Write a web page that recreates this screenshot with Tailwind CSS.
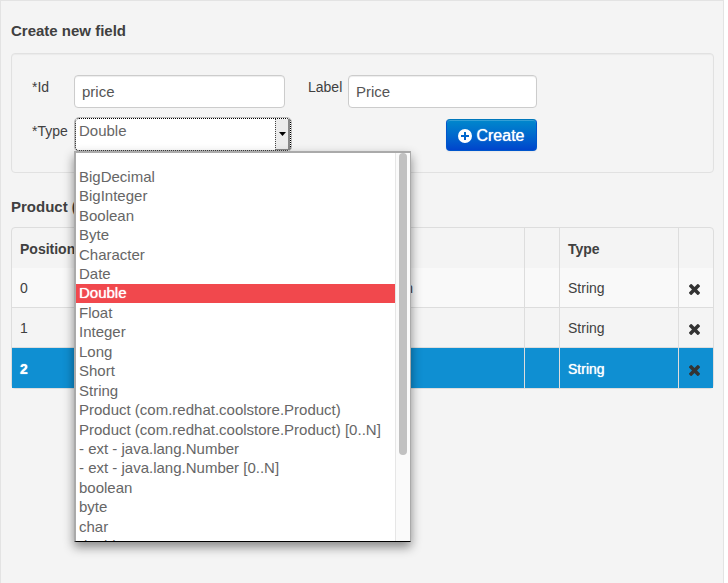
<!DOCTYPE html>
<html lang="en">
<head>
<meta charset="utf-8">
<meta name="viewport" content="width=device-width, initial-scale=1">
<title>Create new field</title>
<script src="https://cdn.jsdelivr.net/npm/@tailwindcss/browser@4"></script>
</head>
<body class="bg-white pr-1 font-['Liberation_Sans',Arial,sans-serif] text-[#404040]">
<svg class="hidden" aria-hidden="true">
  <symbol id="remove" viewBox="302 366 1188 1188"><path d="M1490 1322q0 40-28 68l-136 136q-28 28-68 28t-68-28l-294-294-294 294q-28 28-68 28t-68-28l-136-136q-28-28-28-68t28-68l294-294-294-294q-28-28-28-68t28-68l136-136q28-28 68-28t68 28l294 294 294-294q28-28 68-28t68 28l136 136q28 28 28 68t-28 68l-294 294 294 294q28 28 28 68z"/></symbol>
</svg>
<main class="min-h-screen border border-b-0 border-[#e3e3e3] bg-[#f4f4f4] pt-5 pr-[9px] pl-[10px]">
  <h2 class="text-[15px] leading-5 font-bold">Create new field</h2>

  <form class="mt-3 h-[120px] rounded border border-[#e1e1e1] px-5 pt-[21px] shadow-[inset_0_1px_1px_rgba(0,0,0,0.04)]">
    <div class="flex items-start">
      <label for="fid" class="w-[42px] shrink-0 pt-[2px] text-[14px] leading-5">*Id</label>
      <input id="fid" type="text" value="price" class="h-[33px] w-[211px] rounded border border-[#ccc] bg-white px-[7px] text-[15px] text-[#555] shadow-[inset_0_1px_1px_rgba(0,0,0,0.075)]">
      <label for="flabel" class="ml-[23px] w-10 shrink-0 pt-[2px] text-[14px] leading-5">Label</label>
      <input id="flabel" type="text" value="Price" class="h-[33px] w-[189px] rounded border border-[#ccc] bg-white px-[7px] text-[15px] text-[#555] shadow-[inset_0_1px_1px_rgba(0,0,0,0.075)]">
    </div>
    <div class="mt-[10px] flex items-start">
      <label for="ftype" class="w-[43px] shrink-0 pt-[3px] text-[14px] leading-5">*Type</label>
      <div class="relative w-[216px]">
        <select id="ftype" class="block h-[33px] w-full appearance-none rounded-sm border border-dotted border-black bg-white pr-5 pb-2 pl-[3px] text-[15px] leading-5 text-[#666] outline-1 outline-[#bbb]">
          <option>Double</option>
        </select>
        <span class="pointer-events-none absolute top-px right-px bottom-px flex w-[15px] items-center justify-center border-r-2 border-b border-l border-r-[#888] border-b-[#888] border-l-[#444] bg-[#ececec] [border-left-style:dotted]">
          <svg viewBox="0 0 7 4" class="h-1 w-[7px]"><path d="M0 0h7L3.500 4z"/></svg>
        </span>

        <div class="absolute top-[33px] -left-px z-10 flex h-[391px] w-[337px] overflow-hidden border-t-2 border-r border-b border-l-2 border-t-[#aaa] border-r-[#aaa] border-b-black border-l-[#aaa] bg-white shadow-[0_5px_10px_rgba(0,0,0,0.45)]">
          <ul role="listbox" aria-label="Type" class="mt-[14px] grid h-[389px] flex-1 auto-rows-fr text-[15px] leading-5 whitespace-nowrap text-[#666] *:flex *:items-center *:pl-[3px]">
            <li role="option">BigDecimal</li>
            <li role="option">BigInteger</li>
            <li role="option">Boolean</li>
            <li role="option">Byte</li>
            <li role="option">Character</li>
            <li role="option">Date</li>
            <li role="option" aria-selected="true" class="bg-[#f1484d] text-white text-shadow-[0_0_1px_#fff]">Double</li>
            <li role="option">Float</li>
            <li role="option">Integer</li>
            <li role="option">Long</li>
            <li role="option">Short</li>
            <li role="option">String</li>
            <li role="option">Product (com.redhat.coolstore.Product)</li>
            <li role="option">Product (com.redhat.coolstore.Product) [0..N]</li>
            <li role="option">- ext - java.lang.Number</li>
            <li role="option">- ext - java.lang.Number [0..N]</li>
            <li role="option">boolean</li>
            <li role="option">byte</li>
            <li role="option">char</li>
            <li role="option">double</li>
          </ul>
          <div class="w-[15px] border-l border-[#e6e6e6] bg-[#fafafa] px-[3px]">
            <div class="h-[302px] w-2 rounded-full bg-[#c1c1c1]"></div>
          </div>
        </div>
      </div>
      <button type="button" class="mt-px ml-[155px] flex h-8 w-[91px] items-center justify-center gap-1 rounded border border-[#0055cc] border-t-[#0077bb] bg-linear-to-b from-[#0088cc] to-[#0044cc] pt-px text-[16px] text-white shadow-[inset_0_1px_0_rgba(255,255,255,0.2),0_1px_2px_rgba(0,0,0,0.05)] text-shadow-[0_0_1px_#fff]">
        <svg viewBox="0 0 14 14" class="size-[14px]" fill="#fff" fill-rule="evenodd" aria-hidden="true"><path d="M7 0a7 7 0 1 0 0 14A7 7 0 0 0 7 0zM6 3h2v3h3v2H8v3H6V8H3V6h3z"/></svg>
        Create
      </button>
    </div>
  </form>

  <h2 class="mt-6 text-[15px] leading-5 font-bold">Product (com.redhat.coolstore.Product)</h2>

  <table class="mt-[10px] w-full table-fixed border-separate border-spacing-0 rounded border border-[#dddddd] text-left text-[14px] leading-5 **:[td]:px-2 **:[td]:pt-px **:[th]:px-2 **:[th]:pt-[2px]">
    <colgroup><col class="w-20"><col class="w-[242px]"><col><col class="w-[35px]"><col class="w-[119px]"><col class="w-[35px]"></colgroup>
    <thead>
      <tr class="h-10 *:border-l *:border-[#ddd] *:first:border-l-0">
        <th>Position</th><th></th><th></th><th></th><th>Type</th><th></th>
      </tr>
    </thead>
    <tbody class="*:*:border-l *:*:border-[#ddd] *:*:first:border-l-0">
      <tr class="h-10 bg-[#f9f9f9] *:border-b">
        <td>0</td><td></td><td>Description</td><td></td><td>String</td>
        <td><button type="button" aria-label="Remove field 0" class="block pt-[3px] pl-[2px]"><svg class="size-[11px] fill-[#333]"><use href="#remove"/></svg></button></td>
      </tr>
      <tr class="h-10 *:border-b">
        <td>1</td><td></td><td></td><td></td><td>String</td>
        <td><button type="button" aria-label="Remove field 1" class="block pt-[3px] pl-[2px]"><svg class="size-[11px] fill-[#333]"><use href="#remove"/></svg></button></td>
      </tr>
      <tr class="h-10 bg-[#0f8fd2] text-white text-shadow-[0_0_1px_#fff]">
        <td class="font-bold">2</td><td></td><td></td><td></td><td>String</td>
        <td><button type="button" aria-label="Remove field 2" class="block pt-[3px] pl-[2px]"><svg class="size-[11px] fill-[#333]"><use href="#remove"/></svg></button></td>
      </tr>
    </tbody>
  </table>
</main>
</body>
</html>
